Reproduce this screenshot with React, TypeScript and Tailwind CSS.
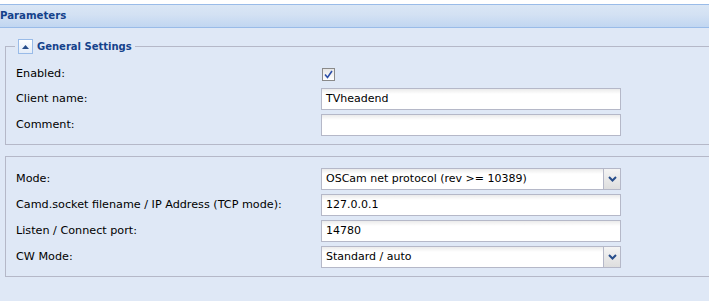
import React from 'react';

const font = { fontFamily: '"DejaVu Sans", "Liberation Sans", sans-serif' };

const Chevron: React.FC = () => (
  <svg width="9" height="6" viewBox="0 0 9 6">
    <path d="M1 1 L4.5 4.5 L8 1" fill="none" stroke="#274d8a" strokeWidth="2" />
  </svg>
);

const TextInput: React.FC<{ value?: string }> = ({ value = '' }) => (
  <div className="w-[300px] h-[22px] border border-[#b5b8c8] bg-white bg-gradient-to-b from-[#ebebeb] via-white via-[25%] to-white flex items-center px-[4px] text-[11px] text-black">
    {value}
  </div>
);

const Select: React.FC<{ value: string }> = ({ value }) => (
  <div className="w-[300px] h-[22px] border border-[#b5b8c8] bg-white bg-gradient-to-b from-[#ebebeb] via-white via-[25%] to-white flex items-center text-[11px] text-black">
    <span className="flex-1 px-[4px]">{value}</span>
    <div className="w-[17px] h-full border-l border-[#b5b8c8] bg-gradient-to-b from-[#f4f4f4] to-[#dedede] flex items-center justify-center">
      <Chevron />
    </div>
  </div>
);

const Row: React.FC<{ label: string; h?: string; children: React.ReactNode }> = ({ label, h = 'h-[26px]', children }) => (
  <div className={`flex items-center ${h}`}>
    <div className="w-[305px] text-[11.2px] text-black">{label}</div>
    {children}
  </div>
);

export default function App() {
  return (
    <div className="w-[709px] h-[301px] overflow-hidden bg-[#dfe8f6]" style={font}>
      <div className="h-[4px] bg-white" />
      <div className="w-[760px] h-[24px] border-y border-[#99bbe8] bg-gradient-to-b from-[#dae6f5] via-[#d3e1f3] via-[45%] to-[#c1d6f1] flex items-center text-[10.2px] font-bold text-[#15428b]">
        Parameters
      </div>
      <div className="w-[760px] pl-[5px] pt-[11px]">
        <fieldset className="border border-[#b5b8c8] pl-[10px] pb-[6px]">
          <legend className="ml-[-1px] px-[3px] flex items-center gap-[4px]">
            <span className="w-[15px] h-[15px] border border-[#99bbe8] bg-gradient-to-b from-white to-[#e3ecf8] flex items-center justify-center">
              <svg width="7" height="4" viewBox="0 0 7 4">
                <path d="M0 4 L3.5 0 L7 4 Z" fill="#274d8a" />
              </svg>
            </span>
            <span className="text-[10px] font-bold text-[#15428b]">General Settings</span>
          </legend>
          <div className="pt-[8px]">
            <Row label="Enabled:" h="h-[24px]">
              <div className="w-[13px] h-[13px] border border-[#8a8a8a] bg-gradient-to-b from-[#e6e6e6] to-white flex items-center justify-center ml-[1px]">
                <svg width="9" height="9" viewBox="0 0 9 9">
                  <path d="M1 4.5 L3.5 7.5 L8 1" fill="none" stroke="#2d4fa8" strokeWidth="1.6" />
                </svg>
              </div>
            </Row>
            <Row label="Client name:">
              <TextInput value="TVheadend" />
            </Row>
            <Row label="Comment:">
              <TextInput />
            </Row>
          </div>
        </fieldset>
        <fieldset className="border border-[#b5b8c8] pl-[10px] pt-[9px] pb-[6px] mt-[11px]">
          <Row label="Mode:">
            <Select value="OSCam net protocol (rev >= 10389)" />
          </Row>
          <Row label="Camd.socket filename / IP Address (TCP mode):">
            <TextInput value="127.0.0.1" />
          </Row>
          <Row label="Listen / Connect port:">
            <TextInput value="14780" />
          </Row>
          <Row label="CW Mode:">
            <Select value="Standard / auto" />
          </Row>
        </fieldset>
      </div>
    </div>
  );
}
